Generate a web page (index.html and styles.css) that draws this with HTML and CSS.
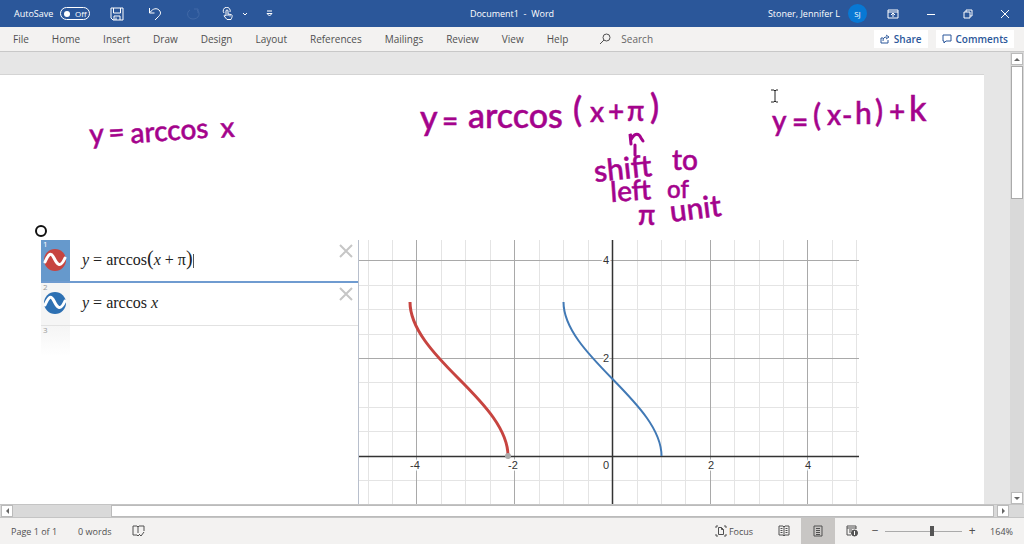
FILE: index.html
```html
<!DOCTYPE html>
<html lang="en">
<head>
<meta charset="utf-8">
<title>Document1 - Word</title>
<link rel="stylesheet" href="styles.css">
</head>
<body>
<header class="titlebar">
  <div class="quick">
    <span class="autosave">AutoSave</span>
    <button class="toggle" aria-label="AutoSave"><i class="knob"></i>Off</button>
    <button class="tool save" aria-label="Save"><svg width="14" height="14" viewBox="0 0 14 14"><path d="M1 1h12v12H3l-2-2zM3.500 1v5h7V1M4 13V9h6v4M6 10.500V13"/></svg></button>
    <button class="tool undo" aria-label="Undo"><svg width="14" height="14" viewBox="0 0 14 14"><path d="M1.500 1v5h5M2 5.500C5 1 9 1 11 3c3 3 1 5-1 7l-3 3"/></svg></button>
    <button class="tool redo" aria-label="Redo" disabled><svg width="14" height="14" viewBox="0 0 14 14"><path d="M4 3C0 5 1 12 7 12s8-6 4-9M8 2h4v4"/></svg></button>
    <button class="tool touch" aria-label="Touch mode"><svg width="12" height="14" viewBox="0 0 12 14"><path d="M2 6a3.500 3.500 0 1 1 6-1M4 9V4c0-1.500 2-1.500 2 0v3l3 .5c2 .5 1 3 0 5H5L2 9c0-1 1-1 2 0M6 7v2M8 7.500v2"/></svg><svg width="6" height="4" viewBox="0 0 6 4"><path d="M1 1l2 2 2-2"/></svg></button>
    <button class="tool" aria-label="Customize toolbar"><svg width="7" height="7" viewBox="0 0 7 7"><path d="M1 1h5M1 3.500h5L3.500 6z"/></svg></button>
  </div>
  <div class="doc-title">Document1&nbsp; -&nbsp; Word</div>
  <div class="account">
    <span class="user">Stoner, Jennifer L</span>
    <span class="avatar">SJ</span>
    <button class="win" aria-label="Ribbon display options"><svg width="12" height="10" viewBox="0 0 12 10"><path d="M1 1h10v8H1zM1 3h10M6 8V4M4 6l2-2 2 2"/></svg></button>
    <button class="win" aria-label="Minimize"><svg width="10" height="10" viewBox="0 0 10 10"><path d="M1 5.500h8"/></svg></button>
    <button class="win" aria-label="Restore"><svg width="10" height="10" viewBox="0 0 10 10"><path d="M1 3h6v6H1zM3 3V1h6v6H7"/></svg></button>
    <button class="win" aria-label="Close"><svg width="10" height="10" viewBox="0 0 10 10"><path d="M1 1l8 8M9 1L1 9"/></svg></button>
  </div>
</header>

<nav class="ribbon">
  <button>File</button><button>Home</button><button>Insert</button><button>Draw</button><button>Design</button><button>Layout</button><button>References</button><button>Mailings</button><button>Review</button><button>View</button><button>Help</button>
  <label class="search"><svg width="12" height="12" viewBox="0 0 12 12"><circle cx="7.500" cy="4.500" r="3.500"/><path d="M5 7L1 11"/></svg><input type="text" placeholder="Search" aria-label="Search"></label>
  <div class="actions">
    <button class="action"><svg width="10" height="10" viewBox="0 0 10 10"><path d="M3 4H1v5h7V6M3 7c0-3 1-4 4-4M6 1l3 2-3 2"/></svg>Share</button>
    <button class="action"><svg width="10" height="10" viewBox="0 0 10 10"><path d="M1 1h8v6H4L2 9V7H1z"/></svg>Comments</button>
  </div>
</nav>

<main class="workspace">
  <div class="canvas">
    <article class="page">
      <svg class="ink" width="984" height="165" viewBox="0 75 984 165" role="img" aria-label="Handwritten notes">
        <g class="hand">
          <g transform="rotate(-4 90 144)">
            <text x="90" y="144">y</text><text x="109" y="144">=</text><text x="131" y="146">arccos</text><text x="221" y="147">x</text>
          </g>
          <text class="big" x="420" y="130">y</text><text x="442" y="131">=</text>
          <text class="big" x="468" y="128">arccos</text>
          <text class="big" x="573" y="122">(</text><text x="590" y="122">x</text><text x="608" y="122">+</text><text x="627" y="121">π</text><text class="big" x="650" y="119">)</text>
          <g transform="rotate(-6 595 182)"><text class="mid" x="595" y="182">shift</text></g>
          <text x="672" y="170">to</text>
          <g transform="rotate(-4 611 202)"><text x="611" y="202">left</text></g>
          <text class="small" x="667" y="198">of</text>
          <text x="638" y="225">π</text>
          <g transform="rotate(-7 671 222)"><text class="mid" x="671" y="222">unit</text></g>
          <text x="772" y="131">y</text><text x="792" y="132">=</text><text class="mid" x="813" y="126">(</text><text x="827" y="125">x</text><text x="842" y="126">-</text><text class="mid" x="855" y="124">h</text><text class="mid" x="875" y="122">)</text><text x="889" y="122">+</text><text class="big" x="909" y="121">k</text>
        </g>
        <path class="arrow" d="M631 144l-1-10 2 4c3-5 7-5 9 0l2 3M635 145v10"/>
        <path class="cursor" d="M771 90h3l1 1 1-1h2M775 91v10M771 102h3l1-1 1 1h2"/>
        <circle class="handle" cx="41" cy="231" r="5"/>
      </svg>

      <section class="embed">
        <ol class="expressions">
          <li class="expr selected">
            <div class="gutter"><span class="num">1</span>
              <svg width="24" height="24" viewBox="0 0 24 24"><circle class="red" cx="12" cy="12" r="11"/><path class="wave" d="M2 14C6 5 8 4 11 10s6 11 11 0"/></svg></div>
            <div class="formula"><i>y</i> = arccos<span class="paren">(</span><i>x</i> + π<span class="paren">)</span><span class="caret"></span></div>
            <button class="remove" aria-label="Delete expression 1"><svg width="14" height="14" viewBox="0 0 14 14"><path d="M1 1l12 12M13 1L1 13"/></svg></button>
          </li>
          <li class="expr">
            <div class="gutter"><span class="num">2</span>
              <svg width="24" height="24" viewBox="0 0 24 24"><circle class="blue" cx="12" cy="12" r="11"/><path class="wave" d="M2 14C6 5 8 4 11 10s6 11 11 0"/></svg></div>
            <div class="formula"><i>y</i> = arccos <i>x</i></div>
            <button class="remove" aria-label="Delete expression 2"><svg width="14" height="14" viewBox="0 0 14 14"><path d="M1 1l12 12M13 1L1 13"/></svg></button>
          </li>
          <li class="expr empty"><div class="gutter"><span class="num">3</span></div></li>
        </ol>
        <svg class="graph" width="500" height="266" viewBox="0 0 500 266" role="img" aria-label="Graph of arccos curves">
          <path class="minor" d="M9.500 0v266M33.500 0v266M82.500 0v266M106.500 0v266M131.500 0v266M180.500 0v266M204.500 0v266M229.500 0v266M278.500 0v266M302.500 0v266M326.500 0v266M375.500 0v266M400.500 0v266M424.500 0v266M473.500 0v266M497.500 0v266M0 45.500h500M0 69.500h500M0 94.500h500M0 142.500h500M0 167.500h500M0 191.500h500M0 240.500h500"/>
          <path class="major" d="M57.500 0v266M155.500 0v266M351.500 0v266M448.500 0v266M0 20.500h500M0 118.500h500"/>
          <path class="axis" d="M253.500 0v266M0 216.500h500"/>
          <path class="curve-blue" d="M204.500 62C204.500 88 228 113 253.500 139S302.500 190 302.500 216"/>
          <path class="curve-red" d="M51 62C51 88 74 113 100 139S149 190 149 216"/>
          <circle class="point" cx="149" cy="216" r="3"/>
          <g class="ticks">
            <text x="56" y="229">-4</text><text x="154" y="229">-2</text><text x="247" y="229">0</text><text x="352" y="229">2</text><text x="449" y="229">4</text><text x="247" y="24">4</text><text x="247" y="122">2</text>
          </g>
        </svg>
      </section>
    </article>
  </div>
  <div class="vscroll">
    <button aria-label="Scroll up"><i class="tri up"></i></button>
    <div class="vthumb"></div>
    <button class="end" aria-label="Scroll down"><i class="tri down"></i></button>
  </div>
</main>

<div class="hscroll">
  <button aria-label="Scroll left"><i class="tri left"></i></button>
  <div class="hthumb"></div>
  <button aria-label="Scroll right"><i class="tri right"></i></button>
</div>

<footer class="status">
  <span>Page 1 of 1</span>
  <span>0 words</span>
  <svg width="13" height="12" viewBox="0 0 13 12"><path d="M6 2L5 1H1v9h4l1 1 1-1M6 2l1-1h5v5M6 2v6M7 9l2 2 3-4"/></svg>
  <div class="views">
    <button class="focus"><svg width="12" height="12" viewBox="0 0 12 12"><path d="M3 1H1v2M1 9v2h2M9 1h2v2M9 11h2V9M3.500 2.500h3l2 2v5h-5zM6.500 2.500v2h2"/></svg>Focus</button>
    <button class="view" aria-label="Read mode"><svg width="12" height="12" viewBox="0 0 12 12"><path d="M1 1h4l1 1 1-1h4v9H7l-1 1-1-1H1zM6 2v8M2.500 3.500h2M2.500 5.500h2M2.500 7.500h2M7.500 3.500h2M7.500 5.500h2M7.500 7.500h2"/></svg></button>
    <button class="view active" aria-label="Print layout"><svg width="10" height="12" viewBox="0 0 10 12"><path d="M1 1h8v10H1zM3 3.500h4M3 5.500h4M3 7.500h4M3 9.500h4"/></svg></button>
    <button class="view" aria-label="Web layout"><svg width="12" height="12" viewBox="0 0 12 12"><path d="M5 10H1V1h9v3M1 3h9M3 5h3M3 7h2"/><circle class="globe" cx="8.500" cy="8" r="3"/><path class="light" d="M8.500 6v4"/></svg></button>
    <button class="zoom" aria-label="Zoom out">−</button>
    <input class="slider" type="range" min="0" max="100" value="61" aria-label="Zoom">
    <button class="zoom" aria-label="Zoom in">+</button>
    <span class="percent">164%</span>
  </div>
</footer>
</body>
</html>
```

FILE: styles.css
```css
* { box-sizing: border-box; }
body {
  margin: 0;
  height: 100vh;
  display: flex;
  flex-direction: column;
  overflow: hidden;
  font-family: "Segoe UI", "Open Sans", "Noto Sans", sans-serif;
  font-size: 10px;
  color: #505050;
  background: #e6e6e6;
}
button, input { font: inherit; color: inherit; border: 0; padding: 0; margin: 0; background: none; }
svg { display: block; fill: none; stroke: currentColor; stroke-width: 1; flex: none; }

.titlebar {
  flex: none;
  display: grid;
  grid-template-columns: 1fr auto 1fr;
  align-items: center;
  height: 27px;
  color: #fff;
  background: #2b579a;
}
.quick { display: flex; align-items: center; padding-left: 14px; }
.autosave { width: 46px; font-size: 9px; }
.doc-title { font-size: 9px; }
.user { font-size: 9px; }
.toggle { display: flex; align-items: center; gap: 5px; width: 30px; height: 13px; padding-left: 3px; border: 1px solid #fff; border-radius: 7px; font-size: 8px; line-height: 10px; }
.knob { width: 6px; height: 6px; border-radius: 50%; background: #fff; }
.tool { display: flex; align-items: center; gap: 8px; margin-right: 20px; }
.save { margin-left: 20px; margin-right: 24px; }
.undo { margin-right: 24px; }
.redo { color: #4169a7; }
.touch { margin-left: 2px; margin-right: 18px; }
.account { display: flex; align-items: center; justify-content: flex-end; padding-right: 14px; }
.avatar { width: 19px; height: 19px; margin: 0 20px 0 8px; border-radius: 50%; background: #0878d4; font-size: 8px; line-height: 19px; text-align: center; }
.win { margin-left: 27px; }
.avatar + .win { margin-left: 0; }

.ribbon { flex: none; display: flex; align-items: center; height: 25px; padding-left: 13px; background: #f3f2f1; border-bottom: 1px solid #c8c8c8; }
.ribbon > button { margin-right: 23px; }
.search { display: flex; align-items: center; gap: 10px; margin-left: 8px; }
.search input { width: 80px; }
.search input::placeholder { color: #666; opacity: 1; }
.actions { display: flex; gap: 8px; margin-left: auto; padding-right: 10px; }
.action { display: flex; align-items: center; gap: 4px; height: 18px; padding: 0 6px; background: #fff; color: #2b579a; font-weight: 600; }

.workspace { flex: 1; min-height: 0; display: flex; }
.canvas { flex: 1; min-width: 0; padding: 22px 26px 0 0; overflow: hidden; }
.page { height: 100%; border-top: 1px solid #d4d4d4; background: #fff; overflow: hidden; }
.ink { stroke: none; max-width: none; }
.hand { fill: #a4038c; stroke: #a4038c; stroke-width: 0.5; font-family: "Segoe Print", Lato, sans-serif; font-size: 28px; font-weight: 500; }
.hand .big { font-size: 34px; }
.hand .mid { font-size: 30px; }
.hand .small { font-size: 24px; }
.arrow { stroke: #a4038c; stroke-width: 3; stroke-linecap: round; }
.cursor { stroke: #222; }
.handle { stroke: #111; stroke-width: 2; fill: #fff; }

.embed { display: flex; margin-left: 41px; }
.expressions { flex: none; width: 318px; height: 266px; margin: 0; padding: 0; list-style: none; border-right: 1px solid #b8bfcc; }
.expr { display: flex; height: 43px; border-bottom: 1px solid #e2e2e2; }
.selected { border-bottom: 2px solid #6f9bd0; }
.empty { height: 30px; border: 0; }
.gutter { width: 29px; padding-left: 2px; background: #f5f5f5; }
.gutter svg { stroke: none; }
.num { display: block; height: 8px; font-size: 8px; line-height: 8px; color: #999; }
.selected .gutter { background: #6699cc; }
.selected .num { color: #fff; }
.empty .gutter { background: linear-gradient(#f5f5f5, #fff); }
.red { fill: #c74440; }
.blue { fill: #2d70b3; }
.gutter .wave { stroke: #fff; stroke-width: 3; stroke-linecap: round; }
.formula { flex: 1; padding-left: 12px; font-family: "Liberation Serif", serif; font-size: 16px; line-height: 40px; color: #222; white-space: pre; }
.paren { font-size: 20px; line-height: 1; }
.caret { display: inline-block; width: 1px; height: 14px; background: #555; vertical-align: middle; }
.remove { align-self: flex-start; margin: 4px 5px 0 0; color: #c6c6c6; }
.remove svg { stroke-width: 2; }

.graph { stroke-width: 1; }
.minor { stroke: #e4e4e4; }
.major { stroke: #a9a9a9; }
.axis { stroke: #333; stroke-width: 1.5; }
.curve-blue { stroke: #4179b5; stroke-width: 2; }
.curve-red { stroke: #c74440; stroke-width: 3; }
.point { fill: #aaa; stroke: none; }
.ticks { fill: #333; stroke: #fff; stroke-width: 3; paint-order: stroke; font-family: "Liberation Sans", Arial, sans-serif; font-size: 11px; text-anchor: middle; }

.vscroll { flex: none; display: flex; flex-direction: column; width: 14px; padding: 1px 1px 0; background: #d9d9d9; }
.vscroll button, .hscroll button { flex: none; display: flex; align-items: center; justify-content: center; width: 12px; height: 12px; background: #fff; border: 1px solid #bbb; }
.vthumb { height: 133px; margin-top: 1px; background: #fff; border: 1px solid #aaa; }
.vscroll .end { margin-top: auto; }
.hscroll { flex: none; display: flex; align-items: center; height: 14px; padding: 0 15px 0 1px; background: #d9d9d9; border-top: 1px solid #c4c4c4; border-bottom: 1px solid #c4c4c4; }
.hthumb { flex: 1; height: 12px; margin: 0 3px 0 98px; background: #fff; border: 1px solid #bbb; }
.tri { width: 0; height: 0; border: 3px solid transparent; }
.up { border-top: 0; border-bottom-color: #666; }
.down { border-bottom: 0; border-top-color: #666; }
.left { border-left: 0; border-right-color: #666; }
.right { border-right: 0; border-left-color: #666; }

.status { flex: none; display: flex; align-items: center; gap: 21px; height: 26px; padding-left: 11px; background: #f3f2f1; font-size: 9px; }
.views { display: flex; align-items: center; align-self: stretch; margin-left: auto; padding-right: 11px; }
.focus { display: flex; align-items: center; gap: 2px; margin-right: 14px; }
.view { display: flex; align-items: center; justify-content: center; width: 34px; height: 26px; }
.active { background: #c8c6c4; }
.globe { fill: #555; }
.light { stroke: #fff; }
.zoom { width: 12px; font-size: 12px; line-height: 12px; }
.slider { appearance: none; width: 77px; height: 12px; margin: 0 4px; background: linear-gradient(#aaa, #aaa) center / 100% 1px no-repeat; }
.slider::-webkit-slider-thumb { appearance: none; width: 4px; height: 10px; background: #555; }
.percent { margin-left: 12px; }
```
